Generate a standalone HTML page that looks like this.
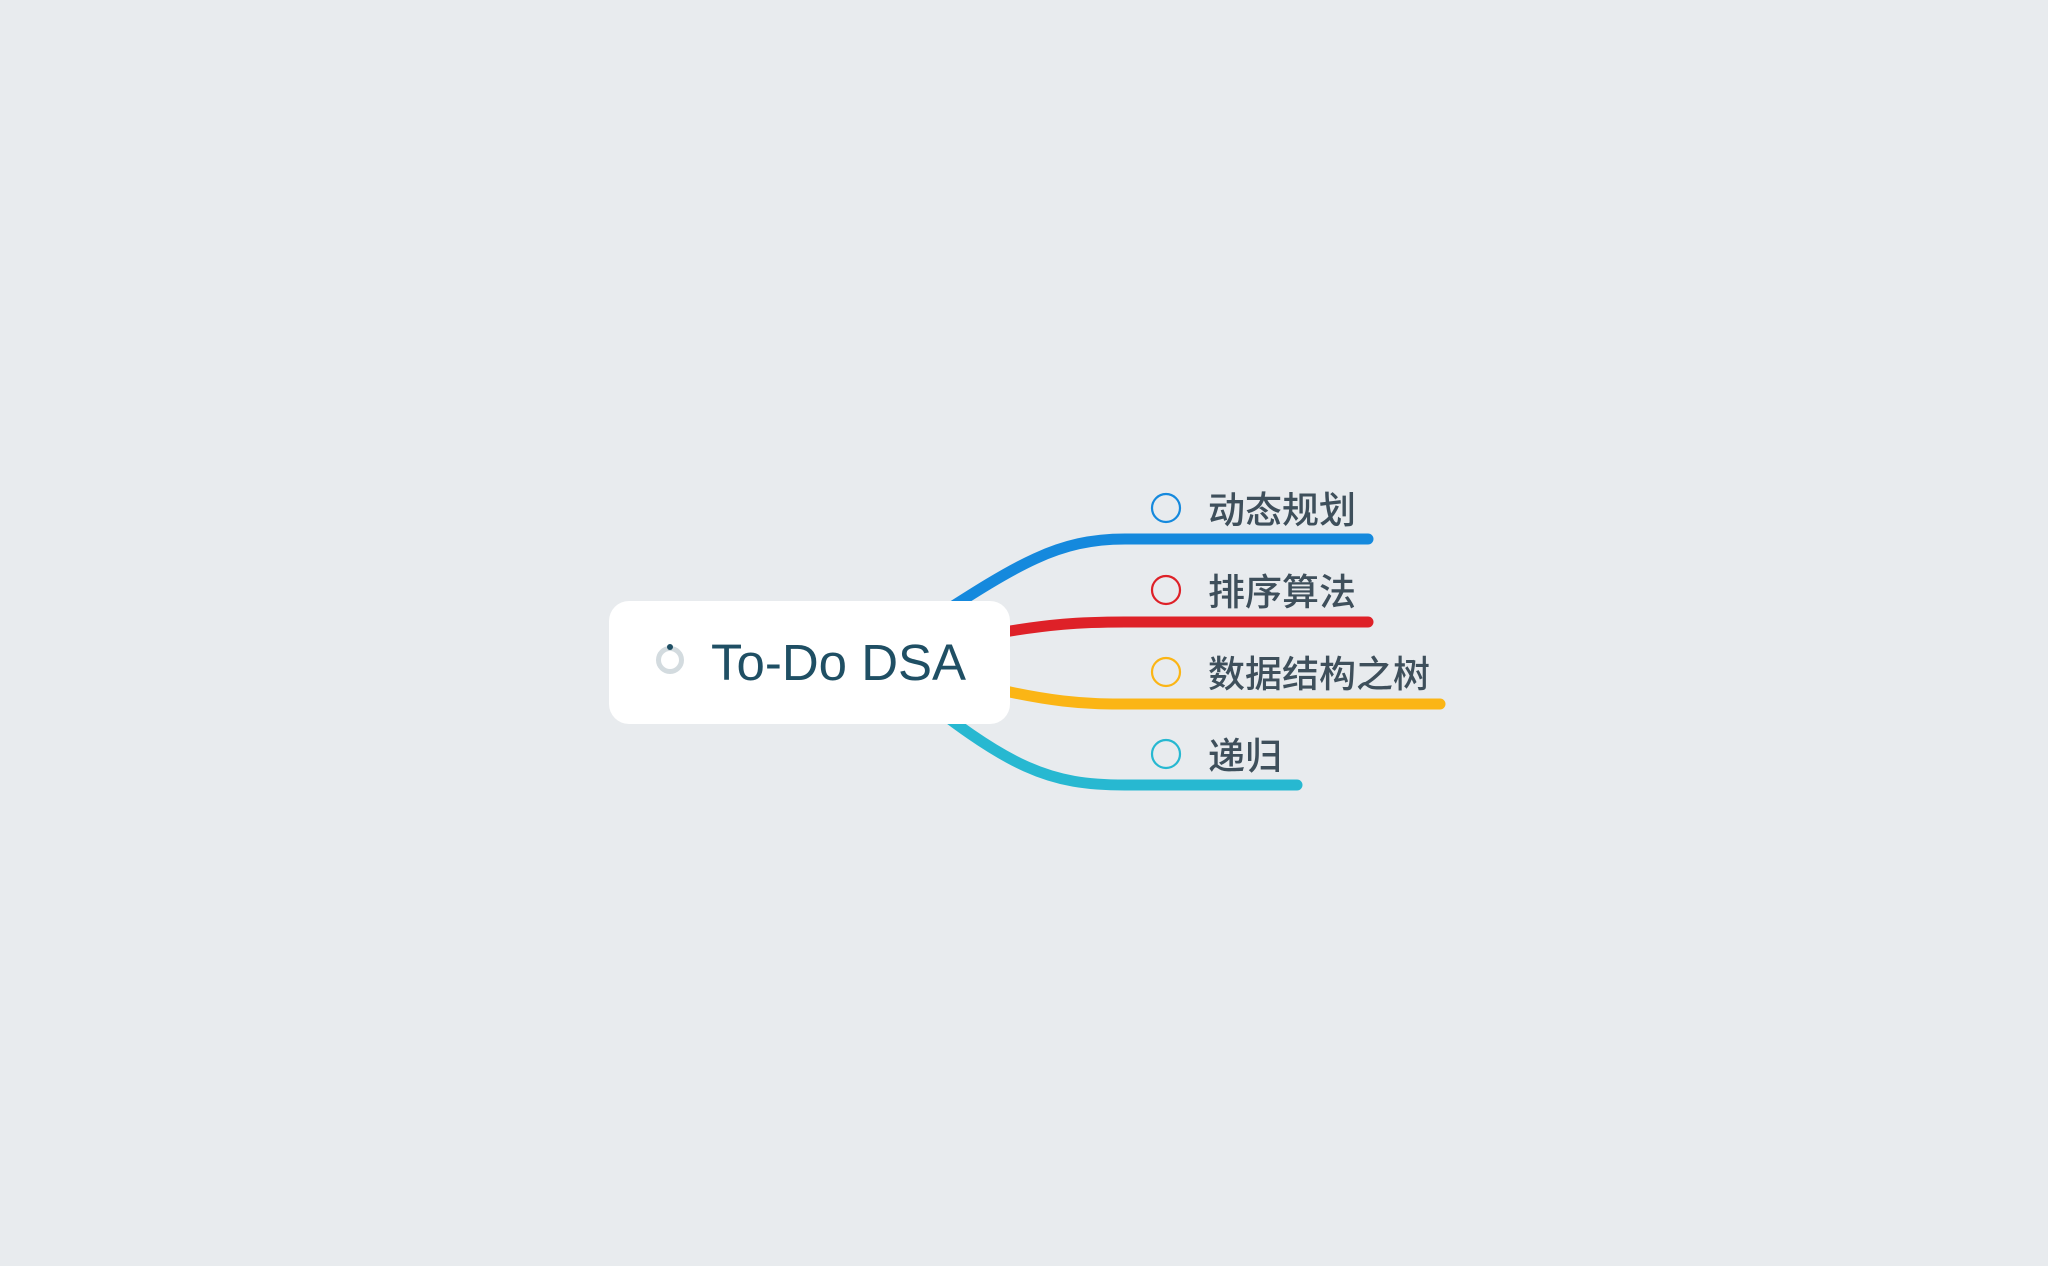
<!DOCTYPE html>
<html><head><meta charset="utf-8"><style>
html,body{margin:0;padding:0;width:2048px;height:1266px;background:#e8ebee;overflow:hidden}
.t{position:absolute;font-family:"Liberation Sans","Noto Sans CJK SC",sans-serif;font-size:37px;color:#3e4f5b;line-height:40px;white-space:nowrap;font-weight:500}
</style></head><body>
<svg width="2048" height="1266" style="position:absolute;left:0;top:0">
<g fill="none" stroke-width="11" stroke-linecap="round">
<path d="M900 640 C1010 570 1050 539 1125 539 L1368 539" stroke="#1589dd"/>
<path d="M960 640 C1050 622 1090 622 1125 622 L1368 622" stroke="#de2128"/>
<path d="M960 680 C1050 704 1090 704 1125 704 L1440 704" stroke="#fbb515"/>
<path d="M900 680 C1010 770 1050 785 1125 785 L1297 785" stroke="#27b8d1"/>
</g>
<rect x="609" y="601" width="401" height="123" rx="20" fill="#fff"/>
<circle cx="670" cy="660" r="11.5" fill="none" stroke="#d3dbdf" stroke-width="5"/>
<circle cx="670" cy="647" r="3" fill="#1f4f64"/>
<g fill="none" stroke-width="2.2">
<circle cx="1166" cy="508" r="14" stroke="#1589dd"/>
<circle cx="1166" cy="590" r="14" stroke="#de2128"/>
<circle cx="1166" cy="672" r="14" stroke="#fbb515"/>
<circle cx="1166" cy="754" r="14" stroke="#27b8d1"/>
</g>
</svg>
<div class="t" style="left:711px;top:637px;font-size:51px;line-height:52px;color:#1f4f64;font-weight:normal">To-Do DSA</div>
<div class="t" style="left:1208px;top:491px">动态规划</div>
<div class="t" style="left:1208px;top:573px">排序算法</div>
<div class="t" style="left:1208px;top:655px">数据结构之树</div>
<div class="t" style="left:1208px;top:737px">递归</div>
</body></html>
